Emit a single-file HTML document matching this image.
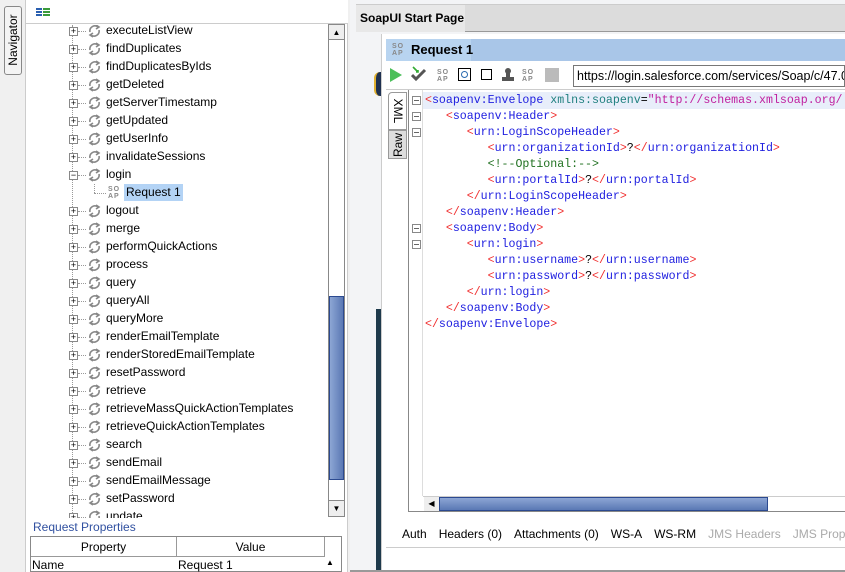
<!DOCTYPE html>
<html><head><meta charset="utf-8"><style>
*{margin:0;padding:0;box-sizing:border-box}
body{width:845px;height:572px;overflow:hidden;background:#f0f0f0;font-family:"Liberation Sans",sans-serif;font-size:12px;color:#000;position:relative}
.a{position:absolute}
.row{position:absolute;left:0;height:18px;width:300px}
.row .pb{position:absolute;left:69px;top:5px;width:9px;height:9px;border:1px solid #888;background:#fff;font-size:9px;line-height:7px;text-align:center;color:#000}
.row .dl{position:absolute;left:78px;top:9px;width:8px;border-top:1px dotted #999}
.row svg{position:absolute;left:87px;top:2px}
.row span{position:absolute;left:106px;top:1px;font-size:12px}
.code{position:absolute;left:425px;font-family:"Liberation Mono",monospace;font-size:11.6px;white-space:pre;color:#2020e0}
.r{color:#f03030}.g{color:#208080}.m{color:#c020a0}.c{color:#207020}.k{color:#000}
.fb{position:absolute;left:412px;width:9px;height:9px;border:1px solid #888;background:#fff}
.fb:after{content:"";position:absolute;left:1px;top:3px;width:5px;border-top:1px solid #666}
.soap{font-family:"Liberation Sans",sans-serif;font-size:7px;line-height:7px;color:#888;font-weight:bold;letter-spacing:1px}
</style></head><body>
<div class="a" style="left:0;top:0;width:26px;height:572px;background:#f0f0f0;border-right:1px solid #ccc"></div>
<div class="a" style="left:4px;top:6px;width:18px;height:69px;border:1px solid #888;border-radius:3px;background:#f4f4f4"></div>
<div class="a" style="left:-16px;top:33px;width:58px;height:14px;transform:rotate(-90deg);font-size:12px;text-align:center;line-height:14px">Navigator</div>
<div class="a" style="left:26px;top:0;width:322px;height:572px;background:#fff;border-right:1px solid #ccc"></div>
<div class="a" style="left:26px;top:0;width:322px;height:24px;background:#fff;border-bottom:1px solid #ccc"></div>
<div class="a" style="left:36px;top:8px;width:6px;height:2px;background:#2a5fb0"></div><div class="a" style="left:43px;top:8px;width:7px;height:2px;background:#3a9a3a"></div>
<div class="a" style="left:36px;top:11px;width:6px;height:2px;background:#2a5fb0"></div><div class="a" style="left:43px;top:11px;width:7px;height:2px;background:#3a9a3a"></div>
<div class="a" style="left:36px;top:14px;width:6px;height:2px;background:#2a5fb0"></div><div class="a" style="left:43px;top:14px;width:7px;height:2px;background:#3a9a3a"></div>
<div class="a" style="left:26px;top:25px;width:302px;height:493px;overflow:hidden">
<div class="a" style="left:46px;top:0;height:500px;border-left:1px dotted #999"></div>
<div id="tree" style="position:absolute;left:-26px;top:-3px"></div>
</div>
<div class="a" style="left:328px;top:24px;width:17px;height:493px;background:#fff;border:1px solid #888"></div>
<div class="a" style="left:329px;top:25px;width:15px;height:15px;background:#eee;border-bottom:1px solid #888;font-size:8px;text-align:center;line-height:15px">▲</div>
<div class="a" style="left:329px;top:296px;width:15px;height:184px;background:linear-gradient(90deg,#8da6d4,#5a78b4);border:1px solid #2c4a90"></div>
<div class="a" style="left:329px;top:500px;width:15px;height:16px;background:#eee;border-top:1px solid #888;font-size:8px;text-align:center;line-height:16px">▼</div>
<div class="a" style="left:33px;top:520px;color:#3050a0;font-size:12px">Request Properties</div>
<div class="a" style="left:30px;top:536px;width:312px;height:36px;border:1px solid #888;background:#fff"></div>
<div class="a" style="left:31px;top:537px;width:146px;height:20px;border-right:1px solid #999;border-bottom:1px solid #999;text-align:center;line-height:20px">Property</div>
<div class="a" style="left:177px;top:537px;width:148px;height:20px;border-right:1px solid #999;border-bottom:1px solid #999;text-align:center;line-height:20px">Value</div>
<div class="a" style="left:32px;top:558px">Name</div>
<div class="a" style="left:178px;top:558px">Request 1</div>
<div class="a" style="left:326px;top:558px;font-size:8px">▲</div>
<div class="a" style="left:350px;top:0;width:495px;height:572px;background:#f3f4f6"></div>
<div class="a" style="left:356px;top:4px;width:489px;height:1px;background:#ccc"></div>
<div class="a" style="left:356px;top:5px;width:489px;height:27px;background:#dcdcdc;border-bottom:1px solid #999"></div>
<div class="a" style="left:356px;top:5px;width:109px;height:27px;background:#e8e8e8;font-weight:bold;font-size:12px;line-height:27px;padding-left:4px">SoapUI Start Page</div>
<div class="a" style="left:376px;top:309px;width:5px;height:263px;background:#1e3a4c"></div>
<div class="a" style="left:374px;top:72px;width:8px;height:24px;border-radius:6px 0 0 6px;background:#1e3050;border-left:2px solid #e0b030"></div>
<div class="a" style="left:381px;top:34px;width:464px;height:538px;background:#fff;border-left:1px solid #ccc"></div>
<div class="a" style="left:386px;top:39px;width:459px;height:22px;background:#a9c6e8"></div>
<div class="a" style="left:386px;top:39px;width:85px;height:22px;background:#b8d4f0"></div>
<div class="a soap" style="left:392px;top:43px">SO<br>AP</div>
<div class="a" style="left:411px;top:42px;font-weight:bold;font-size:13px">Request 1</div>
<div class="a" style="left:386px;top:61px;width:459px;height:29px;background:#fff;border-bottom:1px solid #ccc"></div>
<svg class="a" style="left:389px;top:67px" width="14" height="16"><path d="M1 1 L13 8 L1 15Z" fill="#4cbf5a"/></svg>
<svg class="a" style="left:411px;top:66px" width="16" height="16"><path d="M2 1 L7 6 M5 6 L7 6 L7 4" stroke="#3a3" stroke-width="1.6" fill="none"/><path d="M1 9 L5 13 L14 4" stroke="#555" stroke-width="3" fill="none"/></svg>
<div class="a soap" style="left:437px;top:69px">SO<br>AP</div>
<div class="a" style="left:458px;top:68px;width:13px;height:13px;border:1.5px solid #000;background:#fff"></div>
<div class="a" style="left:461px;top:71px;width:7px;height:7px;border:1.5px solid #2a6ab0;border-radius:50%"></div>
<div class="a" style="left:481px;top:69px;width:11px;height:11px;border:1.5px solid #000"></div>
<svg class="a" style="left:501px;top:67px" width="14" height="15"><circle cx="7" cy="4" r="3" fill="#555"/><rect x="5" y="6" width="4" height="4" fill="#555"/><rect x="1" y="10" width="12" height="4" fill="#555"/></svg>
<div class="a soap" style="left:522px;top:69px">SO<br>AP</div>
<div class="a" style="left:545px;top:68px;width:14px;height:14px;background:#bbb"></div>
<div class="a" style="left:573px;top:65px;width:272px;height:22px;border:1px solid #777;background:#fff;font-size:12.5px;line-height:20px;padding-left:3px;white-space:nowrap;overflow:hidden">https://login.salesforce.com/services/Soap/c/47.0/0</div>
<div class="a" style="left:388px;top:92px;width:19px;height:38px;background:#fff;border:1px solid #999;border-radius:4px 0 0 0"></div>
<div class="a" style="left:380px;top:104px;width:36px;height:14px;transform:rotate(90deg);font-size:12px;text-align:center">XML</div>
<div class="a" style="left:388px;top:130px;width:19px;height:29px;background:#ddd;border:1px solid #999"></div>
<div class="a" style="left:382px;top:138px;width:32px;height:14px;transform:rotate(-90deg);font-size:12px;text-align:center">Raw</div>
<div class="a" style="left:408px;top:90px;width:437px;height:422px;border-left:1px solid #888;border-bottom:1px solid #888;background:#fff"></div>
<div class="a" style="left:422px;top:90px;width:1px;height:406px;background:#ddd"></div>
<div class="a" style="left:423px;top:92px;width:422px;height:17px;background:#e8eefa"></div>
<div class="fb" style="top:96px"></div><div class="fb" style="top:112px"></div><div class="fb" style="top:128px"></div>
<div class="fb" style="top:224px"></div><div class="fb" style="top:240px"></div>
<div class="code" style="top:93px;line-height:16px"><span class="r">&lt;</span>soapenv:Envelope <span class="g">xmlns:soapenv</span><span class="k">=</span><span class="m">"http://schemas.xmlsoap.org/</span>
   <span class="r">&lt;</span>soapenv:Header<span class="r">&gt;</span>
      <span class="r">&lt;</span>urn:LoginScopeHeader<span class="r">&gt;</span>
         <span class="r">&lt;</span>urn:organizationId<span class="r">&gt;</span><span class="k">?</span><span class="r">&lt;/</span>urn:organizationId<span class="r">&gt;</span>
         <span class="c">&lt;!--Optional:--&gt;</span>
         <span class="r">&lt;</span>urn:portalId<span class="r">&gt;</span><span class="k">?</span><span class="r">&lt;/</span>urn:portalId<span class="r">&gt;</span>
      <span class="r">&lt;/</span>urn:LoginScopeHeader<span class="r">&gt;</span>
   <span class="r">&lt;/</span>soapenv:Header<span class="r">&gt;</span>
   <span class="r">&lt;</span>soapenv:Body<span class="r">&gt;</span>
      <span class="r">&lt;</span>urn:login<span class="r">&gt;</span>
         <span class="r">&lt;</span>urn:username<span class="r">&gt;</span><span class="k">?</span><span class="r">&lt;/</span>urn:username<span class="r">&gt;</span>
         <span class="r">&lt;</span>urn:password<span class="r">&gt;</span><span class="k">?</span><span class="r">&lt;/</span>urn:password<span class="r">&gt;</span>
      <span class="r">&lt;/</span>urn:login<span class="r">&gt;</span>
   <span class="r">&lt;/</span>soapenv:Body<span class="r">&gt;</span>
<span class="r">&lt;/</span>soapenv:Envelope<span class="r">&gt;</span></div>
<div class="a" style="left:423px;top:496px;width:422px;height:15px;background:#fff;border-top:1px solid #ccc"></div>
<div class="a" style="left:424px;top:497px;width:15px;height:14px;background:#eee;font-size:8px;line-height:14px;text-align:center">◀</div>
<div class="a" style="left:439px;top:497px;width:329px;height:14px;background:linear-gradient(#8da6d4,#5a78b4);border:1px solid #2c4a90"></div>
<div class="a" style="left:402px;top:527px;font-size:12px;white-space:nowrap;word-spacing:0"><span style="margin-right:12px">Auth</span><span style="margin-right:12px">Headers (0)</span><span style="margin-right:12px">Attachments (0)</span><span style="margin-right:12px">WS-A</span><span style="margin-right:12px">WS-RM</span><span style="margin-right:12px;color:#aaa">JMS Headers</span><span style="color:#aaa">JMS Properties</span></div>
<div class="a" style="left:386px;top:547px;width:459px;height:1px;background:#ccc"></div>
<div class="a" style="left:350px;top:570px;width:495px;height:2px;background:#999"></div>
<script>
var items=["executeListView","findDuplicates","findDuplicatesByIds","getDeleted","getServerTimestamp","getUpdated","getUserInfo","invalidateSessions","login","#Request 1","logout","merge","performQuickActions","process","query","queryAll","queryMore","renderEmailTemplate","renderStoredEmailTemplate","resetPassword","retrieve","retrieveMassQuickActionTemplates","retrieveQuickActionTemplates","search","sendEmail","sendEmailMessage","setPassword","update"];
var ic='<svg width="15" height="14" viewBox="0 0 15 14"><path d="M3 8 A5 5 0 0 1 11 3 M9 1 L12 3 L9 5 M12 6 A5 5 0 0 1 4 11 M6 13 L3 11 L6 9" fill="none" stroke="#888" stroke-width="1.6"/></svg>';
var h="";items.forEach(function(t,i){var top=i*18;
if(t[0]=="#"){h+='<div class="row" style="top:'+top+'px"><div style="position:absolute;left:94px;top:0;height:9px;border-left:1px dotted #999"></div><div style="position:absolute;left:94px;top:9px;width:12px;border-top:1px dotted #999"></div><div class="soap" style="position:absolute;left:108px;top:2px">SO<br>AP</div><span style="left:124px;top:0;background:#b3d3f5;padding:0 2px;height:17px;line-height:17px">Request 1</span></div>';}
else h+='<div class="row" style="top:'+top+'px"><div class="pb">'+(t=="login"?"−":"+")+'</div><div class="dl"></div>'+ic+'<span>'+t+'</span></div>';});
document.getElementById("tree").innerHTML=h;
</script>
</body></html>
